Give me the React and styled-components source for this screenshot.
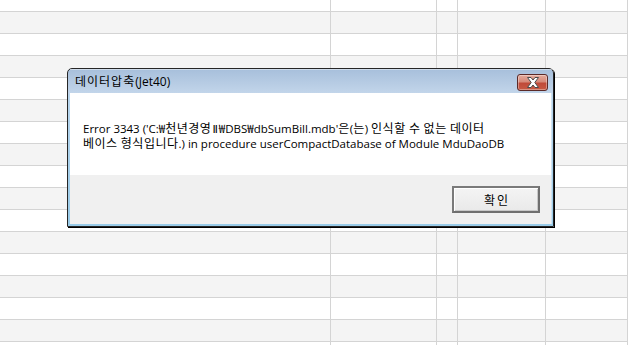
import React from 'react'
import styled, { createGlobalStyle } from 'styled-components'

const GlobalStyle = createGlobalStyle`
  html, body { margin: 0; padding: 0; background: #fff; }
  body { width: 628px; height: 345px; overflow: hidden; position: relative; }
`

const columns = [331, 106, 21, 88, 82]

const Sheet = styled.div`
  display: flex;
  flex-direction: column;
`

const Row = styled.div`
  display: flex;
  height: ${p => p.$h}px;
  box-sizing: border-box;
  border-bottom: ${p => (p.$last ? 'none' : '1px solid #d4d4d4')};
  background: ${p => (p.$shaded ? '#f4f4f4' : '#ffffff')};
`

const Cell = styled.div`
  flex: 0 0 ${p => p.$w}px;
  box-sizing: border-box;
  border-right: 1px solid #d4d4d4;
`

const Window = styled.div`
  position: absolute;
  left: 67px;
  top: 68px;
  width: 487px;
  height: 159px;
  box-sizing: border-box;
  border: 1px solid #262626;
  border-radius: 5px 5px 0 0;
  box-shadow: 1px 1px 0 #000;
  background: linear-gradient(#a7bfdb, #c2d5ea 24px, #b9d6ee 26px, #99cbe8);
  padding: 0 1px 2px 2px;
  display: flex;
  flex-direction: column;
  font-family: "Open Sans", "Noto Sans CJK KR", sans-serif;
`

const TitleBar = styled.div`
  height: 24px;
  display: flex;
  align-items: flex-start;
  justify-content: space-between;
  padding: 0 4px 0 5px;
  border-top: 1px solid rgba(255, 255, 255, 0.45);
  box-sizing: border-box;
`

const Title = styled.span`
  font-size: 12px;
  line-height: 12px;
  margin-top: 5px;
  color: #000;
  white-space: nowrap;
`

const Ko = styled.span`
  font-family: "Noto Sans CJK KR", sans-serif;
  font-size: 12px;
  letter-spacing: ${p => p.$spacing ?? 0.5}px;
`

const Numeral = styled.span`
  font-family: "DejaVu Sans", sans-serif;
  font-size: 11px;
  margin: 0 1px;
`

const CloseButton = styled.div`
  width: 31px;
  height: 17px;
  margin-top: 4px;
  box-sizing: border-box;
  border: 1px solid #5b2a28;
  border-radius: 3px;
  background: linear-gradient(#e5ab9c, #d68a7a 45%, #c04a39 55%, #c75a44);
  box-shadow: inset 0 0 0 1px rgba(255, 255, 255, 0.35);
  display: flex;
  align-items: center;
  justify-content: center;
`

const Client = styled.div`
  flex: 1;
  display: flex;
  flex-direction: column;
  border-right: 1px solid #cfe3f2;
`

const MessageArea = styled.div`
  height: 82px;
  background: #fff;
  box-sizing: border-box;
  padding: 27px 10px 0 13px;
`

const Line = styled.div`
  font-size: 11.5px;
  line-height: 15px;
  height: 15px;
  color: #000;
  white-space: nowrap;
`

const ButtonArea = styled.div`
  flex: 1;
  background: #f0f0f0;
  display: flex;
  justify-content: flex-end;
  align-items: flex-start;
  padding: 11px 11px 0 0;
`

const Button = styled.button`
  width: 88px;
  height: 27px;
  box-sizing: border-box;
  border: 2px solid #6f6f6f;
  border-top-color: #7a7a7a;
  border-left-color: #7a7a7a;
  background: linear-gradient(#f4f4f4, #e9e9e9);
  box-shadow: inset 1px 1px 0 #fff, inset -1px -1px 0 #c8c8c8;
  font-family: "Noto Sans CJK KR", sans-serif;
  font-size: 12px;
  letter-spacing: 2px;
  color: #000;
  padding: 0 0 0 2px;
`

const CloseIcon = () => (
  <svg width="14" height="11" viewBox="0 0 14 11">
    <path
      d="M1.5 0.5 H5 L7 3 L9 0.5 H12.5 L8.8 5.5 L12.5 10.5 H9 L7 8 L5 10.5 H1.5 L5.2 5.5 Z"
      fill="#ffffff"
      stroke="#4b4b4b"
      strokeWidth="1"
      strokeLinejoin="round"
    />
  </svg>
)

const App = () => {
  const rows = [{ h: 12 }]
  for (let i = 1; i < 16; i++) rows.push({ h: 22 })
  rows.push({ h: 3, last: true })

  return (
    <>
      <GlobalStyle />
      <Sheet>
        {rows.map((r, i) => (
          <Row key={i} $h={r.h} $last={r.last} $shaded={i % 2 === 1}>
            {columns.map((w, j) => (
              <Cell key={j} $w={w} />
            ))}
          </Row>
        ))}
      </Sheet>
      <Window>
        <TitleBar>
          <Title>
            <Ko $spacing={1}>데이터압축</Ko>(Jet40)
          </Title>
          <CloseButton>
            <CloseIcon />
          </CloseButton>
        </TitleBar>
        <Client>
          <MessageArea>
            <Line>
              Error 3343 ('C:₩<Ko>천년경영</Ko><Numeral>Ⅱ</Numeral>₩DBS₩dbSumBill.mdb'<Ko>은</Ko>(<Ko>는</Ko>){' '}
              <Ko>인식할 수 없는 데이터</Ko>
            </Line>
            <Line>
              <Ko>베이스 형식입니다</Ko>.) in procedure userCompactDatabase of Module MduDaoDB
            </Line>
          </MessageArea>
          <ButtonArea>
            <Button>확인</Button>
          </ButtonArea>
        </Client>
      </Window>
    </>
  )
}

export default App
